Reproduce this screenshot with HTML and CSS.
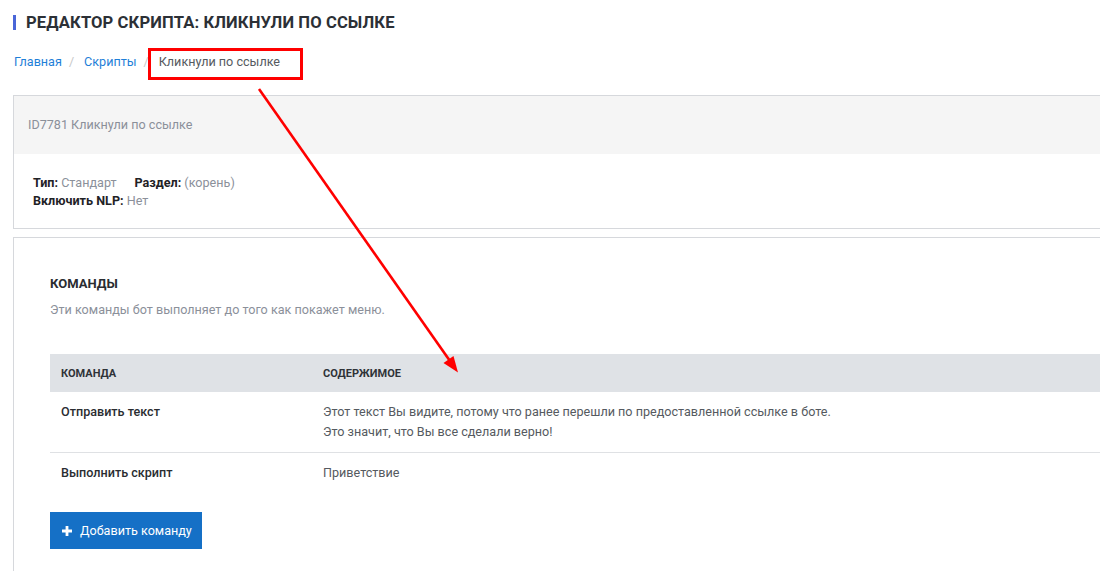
FILE: index.html
```html
<!DOCTYPE html>
<html lang="ru">
<head>
<meta charset="utf-8">
<title>Редактор скрипта</title>
<link rel="stylesheet" href="styles.css">
</head>
<body>
<div class="page">
  <h1 class="title">Редактор скрипта: Кликнули по ссылке</h1>
  <nav class="crumbs">
    <a href="#" class="crumb-link">Главная</a>
    <span class="sep">/</span>
    <a href="#" class="crumb-link">Скрипты</a>
    <span class="sep">/</span>
    <span class="crumb-current">Кликнули по ссылке</span>
  </nav>

  <section class="card">
    <div class="card-head">ID7781 Кликнули по ссылке</div>
    <div class="card-body info">
      <div class="info-row">
        <span class="field"><b>Тип:</b> <span class="val">Стандарт</span></span>
        <span class="field"><b>Раздел:</b> <span class="val">(корень)</span></span>
      </div>
      <div class="info-row">
        <span class="field"><b>Включить NLP:</b> <span class="val">Нет</span></span>
      </div>
    </div>
  </section>

  <section class="card commands">
    <h2 class="sec-title">Команды</h2>
    <p class="sec-sub">Эти команды бот выполняет до того как покажет меню.</p>
    <table class="cmd-table">
      <thead>
        <tr><th class="c1">Команда</th><th>Содержимое</th></tr>
      </thead>
      <tbody>
        <tr class="bordered">
          <td class="c1 name">Отправить текст</td>
          <td class="content">Этот текст Вы видите, потому что ранее перешли по предоставленной ссылке в боте.<br>Это значит, что Вы все сделали верно!</td>
        </tr>
        <tr>
          <td class="c1 name">Выполнить скрипт</td>
          <td class="content">Приветствие</td>
        </tr>
      </tbody>
    </table>
    <button class="btn"><svg class="plus" viewBox="0 0 10 10" width="10" height="10"><path d="M3.6 0h2.8v3.6H10v2.8H6.4V10H3.6V6.4H0V3.6h3.6z" fill="#fff"/></svg>Добавить команду</button>
  </section>
</div>

<svg class="annot" width="1100" height="571" viewBox="0 0 1100 571">
  <rect x="149.5" y="49.5" width="152" height="29" fill="none" stroke="#f00" stroke-width="3"/>
  <line x1="259" y1="89" x2="450" y2="361" stroke="#f00" stroke-width="2.6"/>
  <polygon points="458,372.5 443.5,363 453.5,356" fill="#f00"/>
</svg>
</body>
</html>
```

FILE: styles.css
```css
html, body {
  margin: 0;
  padding: 0;
  overflow: hidden;
  background: #fff;
}
body {
  font-family: Roboto, "Liberation Sans", Arial, sans-serif;
  font-size: 12.6px;
  color: #333;
  width: 1100px;
  height: 571px;
  position: relative;
}
.page {
  padding: 15px 0 0 13px;
}
.title {
  margin: 0;
  font-size: 16.6px;
  line-height: 15px;
  font-weight: 700;
  text-transform: uppercase;
  color: #2c3036;
  border-left: 3px solid #4a66d8;
  padding-left: 10px;
  letter-spacing: 0.1px;
}
.crumbs {
  display: flex;
  align-items: center;
  margin-top: 24px;
  height: 16px;
  line-height: 16px;
  padding-left: 1px;
}
.crumb-link {
  color: #1f7fd8;
  text-decoration: none;
}
.sep {
  color: #c8c8c8;
  padding: 0 10px 0 7px;
}
.crumb-current {
  color: #555a60;
}
.card {
  border: 1px solid #d6d8dc;
  margin-right: -30px;
  margin-top: 25px;
  background: #fff;
}
.card-head {
  background: #f5f5f5;
  height: 58px;
  line-height: 58px;
  padding-left: 14px;
  color: #8b909a;
}
.info {
  padding: 20px 19px 18px;
}
.info-row {
  display: flex;
  line-height: 18px;
  gap: 18px;
}
.field b {
  font-weight: 700;
  color: #1f2226;
}
.val {
  color: #8b909a;
}
.commands {
  margin-top: 8px;
  padding: 37px 0 40px 36px;
}
.sec-title {
  margin: 0;
  font-size: 13px;
  line-height: 18px;
  font-weight: 700;
  text-transform: uppercase;
  color: #2a2d31;
}
.sec-sub {
  margin: 8px 0 0;
  line-height: 18px;
  color: #8b909a;
}
.cmd-table {
  margin-top: 35px;
  width: 100%;
  border-collapse: collapse;
}
.cmd-table th {
  background: #dfe2e6;
  height: 38px;
  padding: 0 11px;
  text-align: left;
  font-size: 11px;
  font-weight: 700;
  text-transform: uppercase;
  color: #2f3338;
}
.cmd-table .c1 {
  width: 240px;
}
.cmd-table td {
  padding: 10px 11px;
  line-height: 20px;
  vertical-align: top;
}
.bordered td {
  border-bottom: 1px solid #dfe1e4;
}
.name {
  font-weight: 500;
  color: #2a2d31;
}
.content {
  color: #555a60;
}
.btn {
  margin-top: 19px;
  display: flex;
  align-items: center;
  gap: 8px;
  height: 37px;
  width: 152px;
  padding: 0 0 0 12px;
  border: none;
  background: #1570c6;
  color: #fff;
  font-family: Roboto, "Liberation Sans", Arial, sans-serif;
  font-size: 12.6px;
  cursor: pointer;
}
.plus {
  flex: none;
}
.annot {
  position: absolute;
  left: 0;
  top: 0;
  pointer-events: none;
}
```
